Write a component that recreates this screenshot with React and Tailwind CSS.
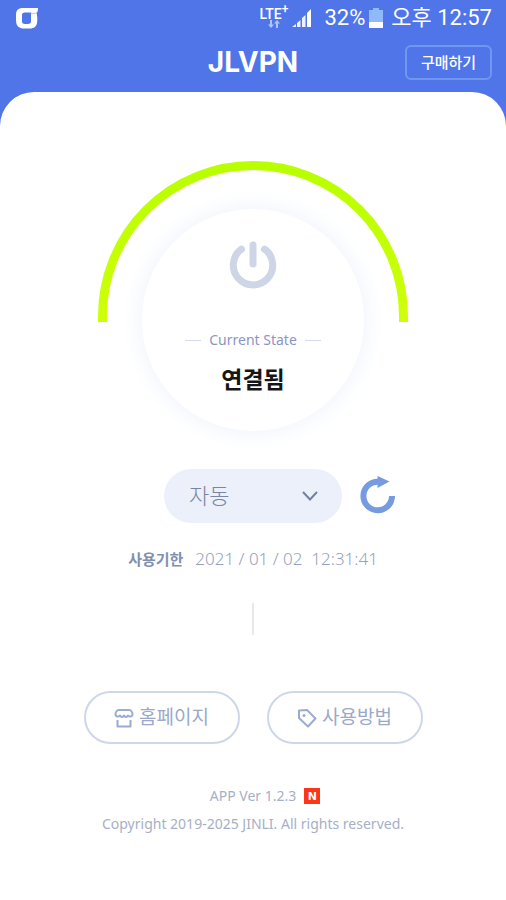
import React from "react";

function CarrierMark() {
  return (
    <svg className="h-[22px] w-[22px]" viewBox="0 0 22 22" fill="none" aria-hidden="true">
      <path
        fillRule="evenodd"
        fill="#fff"
        d="M7 1H22C22 3.500 21.500 5 20.500 6.500C21.200 8 21.300 10 21.300 13C21.300 19 19 21.500 13 21.500H8.500C2.500 21.500 0 19 0 12.500V8.500C0 3 2 1 7 1ZM9 5.500C6.800 5.500 6 6.300 6 8.500V14C6 16.300 6.700 17 9 17H11.800C14.200 17 15 16.200 15 14V5.500H9Z"
      />
      <path d="M14.800 6.500C17 6.800 19 6.500 20.800 5.500" stroke="#b4c4f5" />
    </svg>
  );
}

function SignalIcon() {
  return (
    <svg className="h-5 w-5" viewBox="0 0 20 20" fill="#fff" aria-hidden="true">
      <path d="M0 19L4 16V19ZM5 15L8.500 12V19H5ZM10 10L13.500 7V19H10Z" opacity=".9" />
      <path d="M15 5L19 1V19H15Z" />
    </svg>
  );
}

function DataArrows() {
  return (
    <svg className="h-2 w-3" viewBox="0 0 12 8" fill="#a9c7fa" aria-hidden="true">
      <path d="M3 8L0 4.500H2V0H4V4.500H6ZM9 0L12 3.500H10V8H8V3.500H6Z" />
    </svg>
  );
}

function BatteryIcon() {
  return (
    <svg className="h-5 w-[14px]" viewBox="0 0 14 20" aria-hidden="true">
      <path d="M4 0H10V2H14V20H0V2H4Z" fill="#8fb9f8" />
      <path d="M0 14H14V20H0Z" fill="#fff" />
    </svg>
  );
}

function PowerIcon() {
  return (
    <svg className="h-12 w-12" viewBox="0 0 48 48" fill="none" stroke="#cdd5e6" strokeWidth="7" strokeLinecap="round" aria-hidden="true">
      <path d="M24 4V23" />
      <path d="M12.500 8.200A19.700 19.700 0 1 0 35.500 8.200" />
    </svg>
  );
}

function RefreshIcon() {
  return (
    <svg className="h-10 w-9" viewBox="0 0 36 40" fill="none" aria-hidden="true">
      <path d="M32 20A14.300 14.300 0 1 1 18 5.700" stroke="#769be0" strokeWidth="6" />
      <path d="M17.500 0L29.500 5.500L17.500 12Z" fill="#769be0" />
    </svg>
  );
}

function StoreIcon() {
  return (
    <svg className="h-5 w-5" viewBox="0 0 20 20" fill="none" stroke="#9aaccf" strokeWidth="2" strokeLinejoin="round" aria-hidden="true">
      <path d="M5 2H15C17 2 18.500 4 18.500 6.500C18.500 8.500 15.500 9.500 14 7.500C13 9.500 11 9.500 10 7.500C9 9.500 7 9.500 6 7.500C4.500 9.500 1.500 8.500 1.500 6.500C1.500 4 3 2 5 2Z" />
      <path d="M3.500 12V18.500H16.500V12" />
    </svg>
  );
}

function TagIcon() {
  return (
    <svg className="h-5 w-5" viewBox="0 0 20 20" fill="none" stroke="#9aaccf" strokeWidth="2" strokeLinejoin="round" aria-hidden="true">
      <path d="M2 2.500L10 2L18.500 10.500L11 18.500L2 10Z" />
      <circle cx="7" cy="7.500" r="1.500" fill="#9aaccf" stroke="none" />
    </svg>
  );
}

function StatusBar() {
  return (
    <div className="flex h-9 items-center justify-between pl-4 pr-[14px] font-[Roboto,'Noto_Sans_CJK_KR',sans-serif] text-white">
      <CarrierMark />
      <div className="flex items-center text-[22px] leading-none">
        <div className="mr-1 flex flex-col items-center">
          <span className="text-[14px] leading-3 font-medium">
            LTE<sup className="text-[12px]">+</sup>
          </span>
          <DataArrows />
        </div>
        <SignalIcon />
        <span className="ml-3">32%</span>
        <span className="ml-1">
          <BatteryIcon />
        </span>
        <span className="ml-2">오후 12:57</span>
      </div>
    </div>
  );
}

function Header() {
  return (
    <header className="grid h-14 grid-cols-[1fr_auto_1fr] items-center px-[14px] pb-2 pt-1 text-white">
      <h1 className="col-start-2 font-[Inter,sans-serif] text-[28px] leading-none font-bold">JLVPN</h1>
      <button type="button" className="h-[35px] w-[87px] justify-self-end rounded-md border-2 border-[#7097ee] text-[15px] leading-none font-medium">
        구매하기
      </button>
    </header>
  );
}

function ConnectionDial() {
  return (
    <div className="grid h-[270px] w-[310px] justify-items-center">
      <svg className="col-start-1 row-start-1 h-[162px] w-full" viewBox="0 0 310 162" fill="none" aria-hidden="true">
        <defs>
          <linearGradient id="arc" x1="0" y1="0" x2="0" y2="162" gradientUnits="userSpaceOnUse">
            <stop offset="0" stopColor="#b8ff00" />
            <stop offset="1" stopColor="#ceff0a" />
          </linearGradient>
        </defs>
        <path d="M4.500 161V155A150.500 150.500 0 0 1 305.500 155V161" stroke="url(#arc)" strokeWidth="9" />
      </svg>
      <button
        type="button"
        className="col-start-1 row-start-1 flex h-[222px] w-[222px] flex-col items-center self-end rounded-full bg-white pt-8 shadow-[0_0_20px_4px_#f1f5fc]"
      >
        <PowerIcon />
        <span className="mt-[39px] flex items-center gap-2 text-[14px] leading-6 text-[#8b95c4]">
          <span className="h-px w-4 bg-[#d3daee]" />
          Current State
          <span className="h-px w-4 bg-[#d3daee]" />
        </span>
        <span className="mt-[11px] text-[23px] leading-8 font-bold text-[#161616]">연결됨</span>
      </button>
    </div>
  );
}

function ServerPicker() {
  return (
    <div className="mt-[38px] grid w-full grid-cols-[1fr_auto_1fr] items-center gap-[18px]">
      <div className="col-start-2 grid h-[54px] w-[178px] items-center">
        <select
          aria-label="서버 선택"
          className="col-start-1 row-start-1 h-full w-full appearance-none rounded-full bg-[#ecf0fa] pb-0.5 pl-[25px] text-[22px] font-light text-[#7885a5]"
        >
          <option>자동</option>
        </select>
        <svg className="pointer-events-none col-start-1 row-start-1 mr-6 h-4 w-4 justify-self-end" viewBox="0 0 16 16" fill="none" stroke="#73809f" strokeWidth="2" aria-hidden="true">
          <path d="M1 4L8 11.500L15 4" />
        </svg>
      </div>
      <button type="button" aria-label="새로고침" className="justify-self-start">
        <RefreshIcon />
      </button>
    </div>
  );
}

function LinkPill({ icon, children }) {
  return (
    <a href="#" className="flex h-[53px] w-[156px] items-center justify-center gap-[5px] rounded-full border-2 border-[#ced7ea] text-[19px] leading-none text-[#9aa9ca]">
      {icon}
      <span>{children}</span>
    </a>
  );
}

export default function App() {
  return (
    <div className="min-h-screen bg-[#5075e8] font-['Noto_Sans','Noto_Sans_CJK_KR',sans-serif]">
      <StatusBar />
      <Header />
      <main className="flex min-h-[808px] flex-col items-center rounded-t-[34px] bg-white pt-[69px]">
        <ConnectionDial />
        <ServerPicker />
        <p className="mt-6 flex items-center gap-3 leading-6">
          <span className="text-[15px] font-bold text-[#8190ae]">사용기한</span>
          <span className="text-[17px] font-light whitespace-pre text-[#97a1ba]">2021 / 01 / 02  12:31:41</span>
        </p>
        <div className="mt-8 h-8 w-0.5 bg-[#e6e8ec]" />
        <nav className="mt-14 flex gap-[27px]">
          <LinkPill icon={<StoreIcon />}>홈페이지</LinkPill>
          <LinkPill icon={<TagIcon />}>사용방법</LinkPill>
        </nav>
        <footer className="mt-[38px] flex flex-col items-center text-[14px] leading-7 text-[#a7afc6]">
          <p className="grid w-full grid-cols-[1fr_auto_1fr] items-center gap-2">
            <span className="col-start-2">APP Ver 1.2.3</span>
            <span className="grid h-4 w-4 place-items-center bg-[#ff3517] font-['DejaVu_Sans',sans-serif] text-[11px] leading-none font-bold text-white">
              N
            </span>
          </p>
          <p>Copyright 2019-2025 JINLI. All rights reserved.</p>
        </footer>
      </main>
    </div>
  );
}
